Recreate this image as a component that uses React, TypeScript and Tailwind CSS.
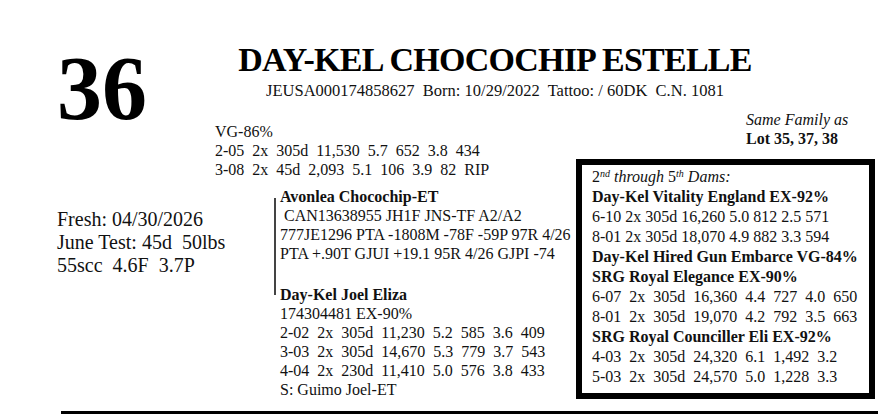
import React from "react";

const sireLines = [
  " CAN13638955 JH1F JNS-TF A2/A2",
  "777JE1296 PTA -1808M -78F -59P 97R 4/26",
  "PTA +.90T GJUI +19.1 95R 4/26 GJPI -74",
];

const damLines = [
  "174304481 EX-90%",
  "2-02  2x  305d  11,230  5.2  585  3.6  409",
  "3-03  2x  305d  14,670  5.3  779  3.7  543",
  "4-04  2x  230d  11,410  5.0  576  3.8  433",
  "S: Guimo Joel-ET",
];

// bold = cow name, otherwise a record line
const familyRows: { text: string; bold?: boolean }[] = [
  { text: "Day-Kel Vitality England EX-92%", bold: true },
  { text: "6-10 2x 305d 16,260 5.0 812 2.5 571" },
  { text: "8-01 2x 305d 18,070 4.9 882 3.3 594" },
  { text: "Day-Kel Hired Gun Embarce VG-84%", bold: true },
  { text: "SRG Royal Elegance EX-90%", bold: true },
  { text: "6-07  2x  305d  16,360  4.4  727  4.0  650" },
  { text: "8-01  2x  305d  19,070  4.2  792  3.5  663" },
  { text: "SRG Royal Counciller Eli EX-92%", bold: true },
  { text: "4-03  2x  305d  24,320  6.1  1,492  3.2" },
  { text: "5-03  2x  305d  24,570  5.0  1,228  3.3" },
];

export default function App() {
  return (
    <div className="w-[892px] h-[414px] bg-white overflow-hidden flex flex-col text-[#111] font-['Liberation_Serif',serif]">
      <div className="flex pl-[57px]">
        {/* Lot number + fresh info */}
        <div className="w-[158px] shrink-0 flex flex-col">
          <div className="mt-[44px] text-[90px] leading-[90px] font-bold text-black">36</div>
          <div className="mt-[74px] text-[20px] leading-[23px] whitespace-pre">
            <div>Fresh: 04/30/2026</div>
            <div>June Test: 45d  50lbs</div>
            <div>55scc  4.6F  3.7P</div>
          </div>
        </div>

        <div className="w-[660px] shrink-0 flex flex-col pt-[42px]">
          {/* Name + registration */}
          <div className="w-[560px] text-center">
            <div className="text-[34px] leading-[36px] font-bold tracking-[-0.75px] text-black">
              DAY-KEL CHOCOCHIP ESTELLE
            </div>
            <div className="mt-[3px] text-[16.5px] leading-[20px] whitespace-pre">
              JEUSA000174858627  Born: 10/29/2022  Tattoo: / 60DK  C.N. 1081
            </div>
          </div>

          <div className="flex">
            {/* Records + pedigree */}
            <div className="w-[361px] shrink-0 text-[16px] leading-[19px] whitespace-pre">
              <div className="mt-[21px]">
                <div>VG-86%</div>
                <div>2-05  2x  305d  11,530  5.7  652  3.8  434</div>
                <div>3-08  2x  45d  2,093  5.1  106  3.9  82  RIP</div>
              </div>
              <div className="mt-[8px] ml-[59px] flex">
                <div className="mt-[11px] h-[97px] w-[2px] bg-[#444] shrink-0" />
                <div className="ml-[4px]">
                  <div className="font-bold">Avonlea Chocochip-ET</div>
                  {sireLines.map((l) => (
                    <div key={l}>{l}</div>
                  ))}
                  <div className="mt-[22px] font-bold">Day-Kel Joel Eliza</div>
                  {damLines.map((l) => (
                    <div key={l}>{l}</div>
                  ))}
                </div>
              </div>
            </div>

            {/* Family box */}
            <div className="w-[299px] shrink-0 flex flex-col text-[16px]">
              <div className="mt-[9px] pl-[170px] leading-[19px]">
                <div className="italic">Same Family as</div>
                <div className="font-bold">Lot 35, 37, 38</div>
              </div>
              <div className="mt-[11px] border-[6px] border-black pt-[2px] pb-[6px] pl-[10px] leading-[20px] whitespace-pre">
                <div>
                  2<sup className="italic text-[10px]">nd</sup>
                  <span className="italic"> through </span>5<sup className="italic text-[10px]">th</sup>
                  <span className="italic"> Dams:</span>
                </div>
                {familyRows.map((r, i) => (
                  <div key={i} className={r.bold ? "font-bold" : ""}>
                    {r.text}
                  </div>
                ))}
              </div>
            </div>
          </div>
        </div>
      </div>

      <div className="mt-[12px] ml-[61px] w-[817px] h-[4px] shrink-0 bg-black" />
    </div>
  );
}
